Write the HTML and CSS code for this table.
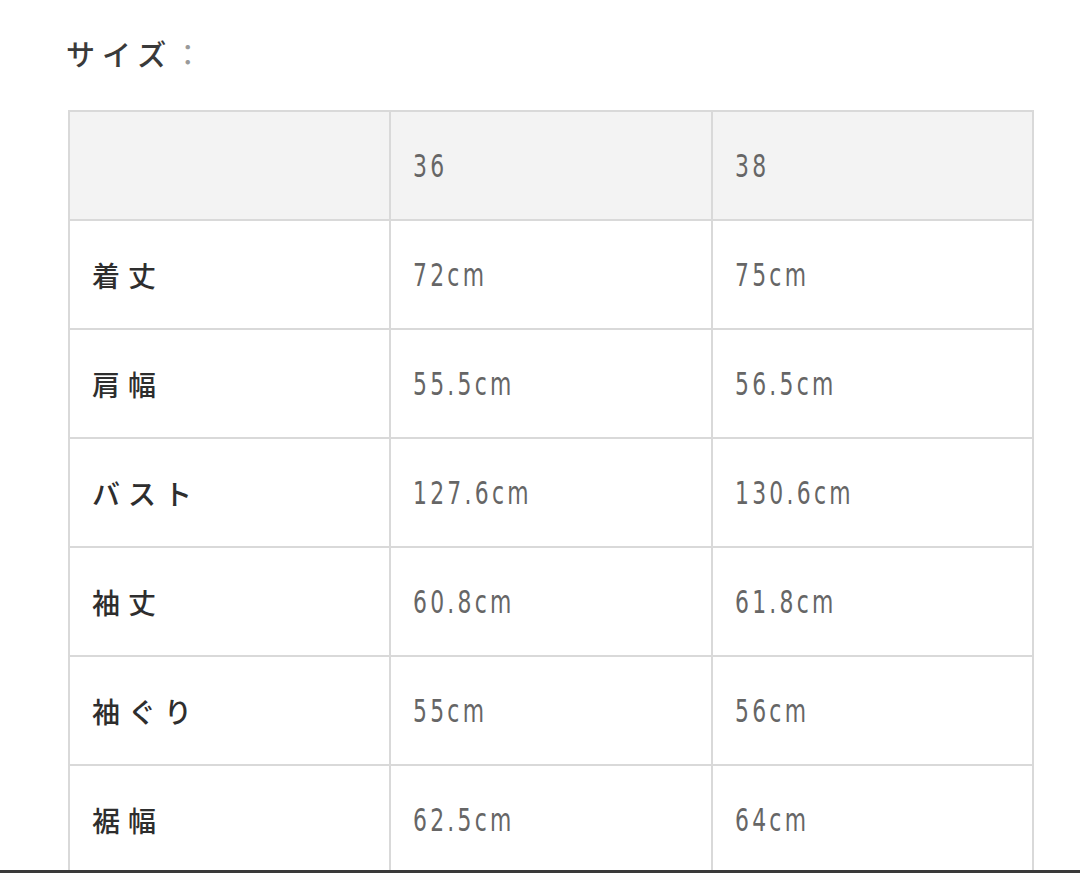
FILE: index.html
```html
<!DOCTYPE html>
<html lang="ja">
<head>
<meta charset="utf-8">
<link rel="stylesheet" href="styles.css">
</head>
<body>
<div class="page">
  <h2 class="title">サイズ<span class="colon">：</span></h2>
  <table class="size-table">
    <thead>
      <tr><th></th><th><span class="num">36</span></th><th><span class="num">38</span></th></tr>
    </thead>
    <tbody>
      <tr><td class="label">着丈</td><td><span class="num">72cm</span></td><td><span class="num">75cm</span></td></tr>
      <tr><td class="label">肩幅</td><td><span class="num">55.5cm</span></td><td><span class="num">56.5cm</span></td></tr>
      <tr><td class="label">バスト</td><td><span class="num">127.6cm</span></td><td><span class="num">130.6cm</span></td></tr>
      <tr><td class="label">袖丈</td><td><span class="num">60.8cm</span></td><td><span class="num">61.8cm</span></td></tr>
      <tr><td class="label">袖ぐり</td><td><span class="num">55cm</span></td><td><span class="num">56cm</span></td></tr>
      <tr><td class="label">裾幅</td><td><span class="num">62.5cm</span></td><td><span class="num">64cm</span></td></tr>
    </tbody>
  </table>
</div>
<div class="edge"></div>
</body>
</html>
```
FILE: styles.css
```css
html, body {
  margin: 0;
  padding: 0;
  background: #fff;
  overflow: hidden;
  height: 873px;
}
.page {
  padding: 34px 0 0 66px;
}
.title {
  margin: 0;
  font-family: "Noto Sans CJK JP", sans-serif;
  font-weight: 500;
  font-size: 29px;
  line-height: 38px;
  letter-spacing: 7px;
  color: #3a3a3a;
}
.colon {
  color: #9a9a9a;
  font-weight: 400;
}
.size-table {
  margin-top: 38px;
  margin-left: 2px;
  border-collapse: collapse;
  width: 966px;
  table-layout: fixed;
}
.size-table th, .size-table td {
  border: 2px solid #d9d9d9;
  height: 107px;
  padding: 0 0 0 22px;
  text-align: left;
  vertical-align: middle;
}
.size-table thead th {
  background: #f3f3f3;
  font-weight: 400;
}
.num {
  display: inline-block;
  font-family: "DejaVu Sans", sans-serif;
  font-stretch: condensed;
  font-size: 32px;
  letter-spacing: 4.3px;
  color: #666;
  transform: scaleX(0.76);
  transform-origin: left center;
}
.label {
  font-family: "Noto Sans CJK JP", sans-serif;
  font-size: 28px;
  font-weight: 500;
  letter-spacing: 8px;
  color: #2e2e2e;
}
.edge {
  position: fixed;
  left: 0;
  right: 0;
  bottom: 0;
  height: 3px;
  background: #3a3a3a;
}
```
